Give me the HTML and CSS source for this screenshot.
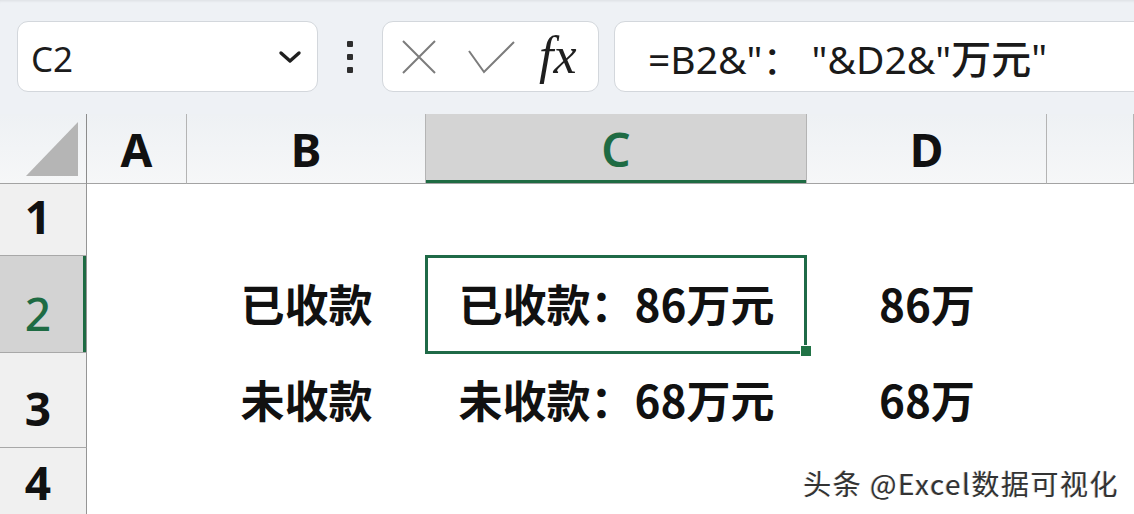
FILE: index.html
```html
<!DOCTYPE html>
<html lang="zh-CN">
<head>
    <meta charset="UTF-8">
    <title>C2 - 已收款</title>
    <link rel="stylesheet" href="styles.css">
</head>
<body>
    <div class="toolbar">
        <div class="name-box">
            <span class="name">C2</span>
            <svg class="chevron" width="24" height="14" viewBox="0 0 24 14">
                <polyline points="3,3 12,11 21,3" fill="none" stroke="#1f1f1f" stroke-width="3.4" stroke-linecap="round" stroke-linejoin="round"/>
            </svg>
        </div>
        <div class="grip"><i></i><i></i><i></i></div>
        <div class="fx-box">
            <svg class="icon-cancel" width="34" height="34" viewBox="0 0 34 34">
                <path d="M1 1 L33 33 M33 1 L1 33" stroke="#7c7c7c" stroke-width="2" fill="none"/>
            </svg>
            <svg class="icon-enter" width="47" height="33" viewBox="0 0 47 33">
                <polyline points="1,10 16,31 46,1" fill="none" stroke="#7c7c7c" stroke-width="2"/>
            </svg>
            <span class="fx">fx</span>
        </div>
        <div class="formula-box">=B2&amp;"： "&amp;D2&amp;"<span class="cjk">万元</span>"</div>
    </div>

    <div class="sheet">
        <div class="corner"><span class="corner-tri"></span></div>
        <div class="col-head">A</div>
        <div class="col-head">B</div>
        <div class="col-head active">C</div>
        <div class="col-head">D</div>
        <div class="col-head"></div>

        <div class="row-head">1</div>
        <div class="cell"></div>
        <div class="cell"></div>
        <div class="cell"></div>
        <div class="cell"></div>
        <div class="cell"></div>

        <div class="row-head active">2</div>
        <div class="cell"></div>
        <div class="cell">已收款</div>
        <div class="cell selected">已收款：86万元<span class="fill-handle"></span></div>
        <div class="cell">86万</div>
        <div class="cell"></div>

        <div class="row-head">3</div>
        <div class="cell"></div>
        <div class="cell">未收款</div>
        <div class="cell">未收款：68万元</div>
        <div class="cell">68万</div>
        <div class="cell"></div>

        <div class="row-head last">4</div>
        <div class="cell"></div>
        <div class="cell"></div>
        <div class="cell"></div>
        <div class="cell"></div>
        <div class="cell"></div>

        <div class="watermark">头条 @Excel数据可视化</div>
    </div>
</body>
</html>
```

FILE: styles.css
```css
html, body {
    margin: 0;
    padding: 0;
    height: 100%;
}

body {
    width: 1134px;
    height: 514px;
    overflow: hidden;
    background-color: #ffffff;
    font-family: "Noto Sans", "Noto Sans CJK SC", sans-serif;
    color: #111111;
}

/* formula bar */
.toolbar {
    display: flex;
    align-items: center;
    height: 71px;
    padding: 21px 0 22px 17px;
    background-color: #eef1f5;
    box-shadow: inset 0 3px 3px -2px rgba(0, 0, 0, 0.08);
    overflow: hidden;
}

.name-box,
.fx-box,
.formula-box {
    box-sizing: border-box;
    height: 71px;
    background-color: #ffffff;
    border: 1px solid #d3d7dc;
    border-radius: 11px;
    display: flex;
    align-items: center;
    flex: none;
}

.name-box {
    width: 301px;
    padding: 0 15px 0 13px;
    justify-content: space-between;
}

.name {
    font-size: 35px;
    color: #1c1c1c;
    margin-top: 3px;
}

.grip {
    display: flex;
    flex-direction: column;
    gap: 7px;
    margin: 0 29px 0 29px;
}

.grip i {
    display: block;
    width: 6px;
    height: 6px;
    border-radius: 1px;
    background-color: #2e2e2e;
}

.fx-box {
    width: 217px;
    padding-left: 19px;
}

.icon-cancel {
    margin-right: 32px;
}

.icon-enter {
    margin-right: 24px;
    margin-top: 2px;
}

.fx {
    font-family: "Liberation Serif", "DejaVu Serif", serif;
    font-style: italic;
    font-size: 52px;
    line-height: 50px;
    color: #1f1f1f;
    margin-top: -2px;
}

.formula-box {
    width: 600px;
    margin-left: 15px;
    padding-left: 33px;
    font-size: 39px;
    color: #1a1a1a;
    white-space: pre;
}

.formula-box .cjk {
    font-family: "Noto Sans CJK SC", sans-serif;
    font-weight: 500;
    font-size: 40px;
}

/* grid */
.sheet {
    position: relative;
    display: grid;
    grid-template-columns: 87px 100px 239px 381px 240px 1fr;
    grid-template-rows: 70px 72px 97px 95px 66px;
}

.corner,
.col-head {
    box-sizing: border-box;
    background: linear-gradient(#eef1f4, #f6f7f8);
    border-bottom: 1px solid #a3a3a3;
}

.corner {
    border-right: 1px solid #8c8c8c;
    position: relative;
}

.corner-tri {
    position: absolute;
    right: 8px;
    bottom: 7px;
    width: 0;
    height: 0;
    border-left: 52px solid transparent;
    border-bottom: 54px solid #b5b5b5;
}

.col-head {
    border-right: 1px solid #b4b4b4;
    display: flex;
    align-items: center;
    justify-content: center;
    font-size: 46px;
    font-weight: 700;
    color: #111111;
    padding-top: 1px;
}

.col-head.active {
    background: #d4d4d4;
    color: #1e6b43;
    font-weight: 600;
    box-shadow: inset 0 -3px 0 #1e6b43;
}

.row-head {
    box-sizing: border-box;
    background-color: #f0f0f0;
    border-right: 1px solid #959595;
    border-bottom: 1px solid #a8a8a8;
    display: flex;
    align-items: flex-end;
    justify-content: center;
    padding: 0 10px 16px 0;
    font-size: 46px;
    font-weight: 700;
    line-height: 46px;
    color: #111111;
}

.row-head.last {
    border-bottom: none;
    padding-bottom: 9px;
}

.row-head.active {
    background-color: #d3d3d3;
    color: #1e6b43;
    font-weight: 500;
    box-shadow: inset -3px 0 0 #1e6b43;
}

.cell {
    display: flex;
    align-items: center;
    justify-content: center;
    font-family: "Noto Sans CJK SC", sans-serif;
    font-size: 44px;
    font-weight: 700;
    color: #111111;
    white-space: nowrap;
    padding-bottom: 4px;
}

.cell.selected {
    position: relative;
}

.cell.selected::after {
    content: "";
    position: absolute;
    left: -1px;
    top: -1px;
    right: 0;
    bottom: -1px;
    border: 3px solid #1f6a47;
}

.fill-handle {
    position: absolute;
    right: -5px;
    bottom: -4px;
    width: 10px;
    height: 10px;
    background-color: #217346;
    border: 1px solid #ffffff;
    z-index: 1;
}

.watermark {
    position: absolute;
    right: 15px;
    top: 349px;
    font-family: "Noto Sans CJK SC", sans-serif;
    font-size: 28px;
    font-weight: 400;
    letter-spacing: 1.5px;
    color: #333333;
    text-shadow: 1px 1px 0 #ffffff, -1px 0 0 #d0d0d0;
}
```
